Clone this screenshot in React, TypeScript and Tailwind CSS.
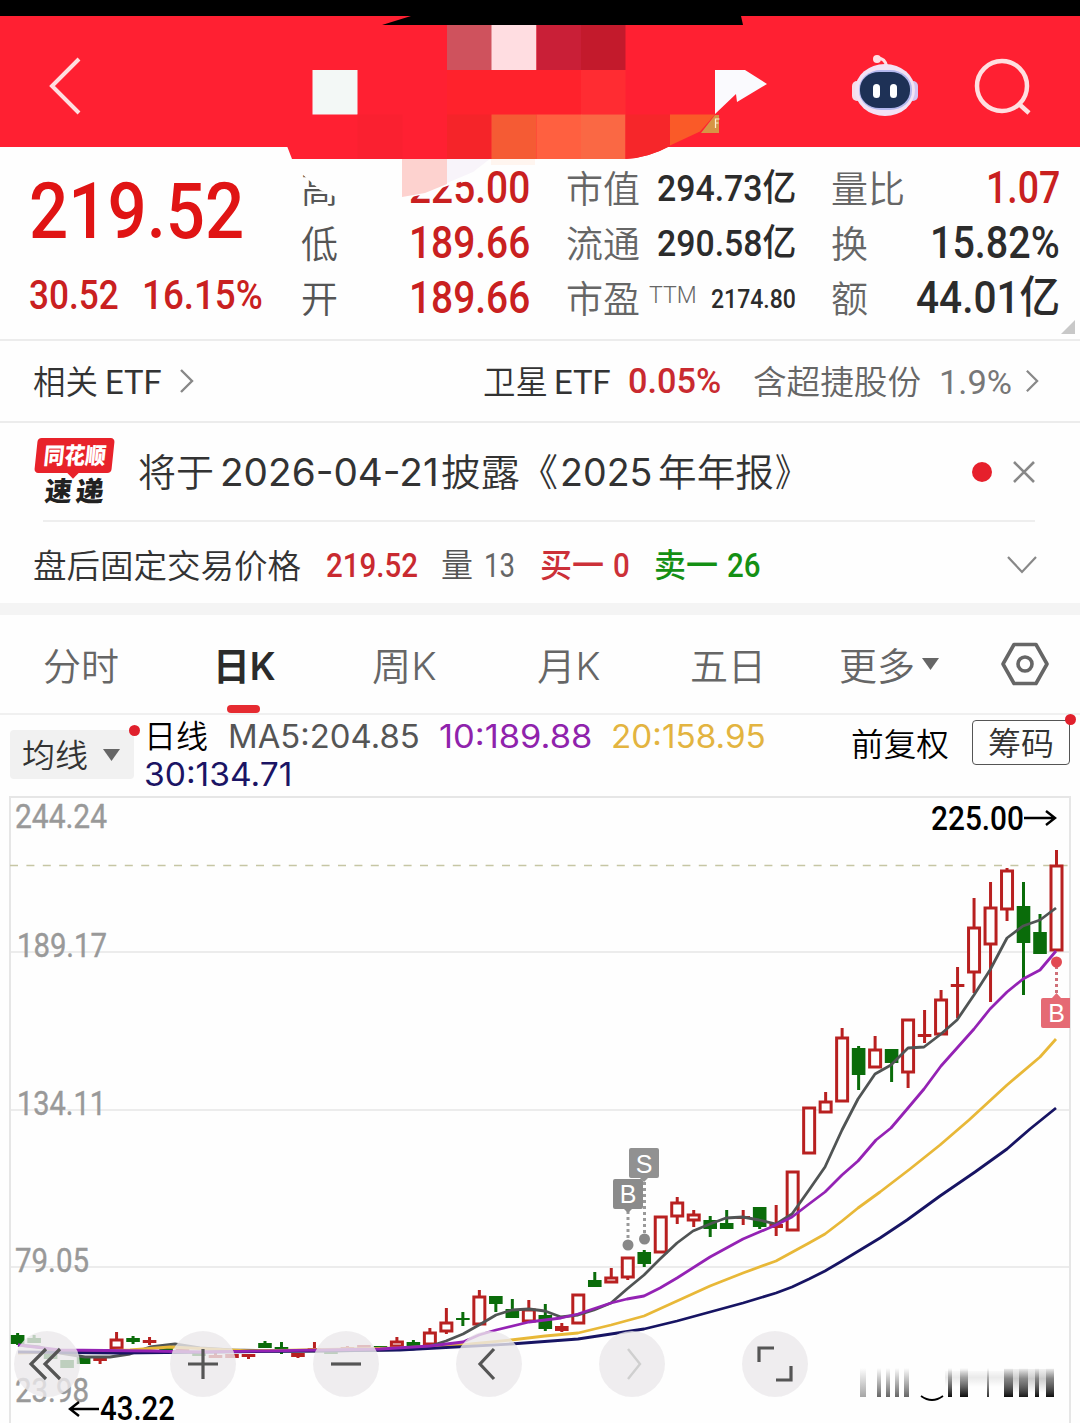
import { useLayoutEffect, useRef, useState } from 'react';
import type { ReactNode } from 'react';

const DIN = "font-[Roboto,'Noto_Sans_CJK_SC',sans-serif]";

type FitProps = {
  className: string;
  children: ReactNode;
};

/** Squeezes a line of text to the width of its box */
function Fit({ className, children }: FitProps) {
  const boxRef = useRef<HTMLSpanElement | null>(null);
  const textRef = useRef<HTMLSpanElement | null>(null);
  const [scale, setScale] = useState(1);

  useLayoutEffect(() => {
    if (boxRef.current && textRef.current) {
      setScale(boxRef.current.offsetWidth / textRef.current.offsetWidth);
    }
  }, [children]);

  return (
    <span ref={boxRef} className={`block shrink-0 leading-none ${className}`}>
      <span
        ref={textRef}
        className="inline-block origin-left whitespace-nowrap leading-none align-top"
        style={{ transform: `scaleX(${scale})` }}
      >
        {children}
      </span>
    </span>
  );
}

function Header() {
  return (
    <header className="h-[147px] border-t-16 border-black bg-[#ff2032] flex items-center pl-[48px] pr-[48px]">
      <button className="w-[34px] h-[58px] mt-[9px]">
        <svg viewBox="0 0 34 58" fill="none" stroke="#ffdfe0" strokeWidth="4">
          <path d="M31 2 4 29l27 27" />
        </svg>
      </button>
      <div className="flex-1" />
      <svg className="w-[68px] h-[64px] mt-[6px] mr-[55px]" viewBox="0 0 68 64">
        <path d="M25 5q9-1 11 9" fill="none" stroke="#ffdfe4" strokeWidth="3" />
        <circle cx="26" cy="6" r="4" fill="#ffdfe4" />
        <rect x="1" y="28" width="10" height="20" rx="5" fill="#f5dcea" />
        <rect x="57" y="28" width="10" height="20" rx="5" fill="#d3c4f2" />
        <rect x="4" y="11" width="60" height="52" rx="30" ry="26" fill="#f3e2f4" />
        <rect x="8" y="17" width="53" height="40" rx="22" ry="19" fill="#b4b8ee" />
        <rect x="9" y="19" width="50" height="36" rx="19" ry="17" fill="#1e3156" />
        <rect x="22" y="31" width="7" height="14" rx="3.5" fill="#fff" />
        <rect x="39" y="31" width="7" height="14" rx="3.5" fill="#fff" />
      </svg>
      <svg className="w-[58px] h-[58px] mt-[9px]" viewBox="0 0 58 58" fill="none" stroke="#ffdfe0" strokeWidth="4.5">
        <circle cx="28" cy="29" r="25" />
        <path d="m45 47 10 9" />
      </svg>
    </header>
  );
}

/** Pixelated patch over the stock name */
function Mosaic() {
  return (
    <svg className="absolute left-0 top-0 w-[1080px] h-[205px] pointer-events-none" viewBox="0 0 1080 205">
      <path d="M290 158 302 174 320 190 336 197 345 182 402 199 425 194 447 186 460 182 474 180 478 168 484 158z" fill="#fefefe" />
      <path d="M402 158h45v26l-22 9-23 4z" fill="#fdd2cf" />
      <path d="M447 158h44l-18 14-26 11z" fill="#f8f4fa" />
      <path d="M491 158h44v7h-44z" fill="#fff5ef" />
      <path d="M382 25 411 16V0h330v16l2 9z" fill="#000" />
      <path d="M287 146h383q-22 12-45 13H292z" fill="#ff2032" />
      <rect x="447" y="25" width="45" height="45" fill="#cf525d" />
      <rect x="491.500" y="25" width="45" height="45" fill="#ffdde1" />
      <rect x="536.500" y="25" width="45" height="45" fill="#c91f37" />
      <rect x="581" y="25" width="44.500" height="45" fill="#c31a2c" />
      <rect x="312.500" y="70" width="45" height="44.500" fill="#f3f8f6" />
      <rect x="447" y="70" width="134" height="44.500" fill="#ff222c" />
      <rect x="581" y="70" width="44.500" height="44.500" fill="#ff2c32" />
      <rect x="357.500" y="114.500" width="45" height="44.500" fill="#fa2030" />
      <rect x="447" y="114.500" width="44.500" height="44.500" fill="#f52429" />
      <rect x="491.500" y="114.500" width="45" height="44.500" fill="#f55b34" />
      <rect x="536.500" y="114.500" width="45" height="44.500" fill="#ff6040" />
      <rect x="581" y="114.500" width="44.500" height="44.500" fill="#fa6844" />
      <path d="M625.500 114.500H670V146q-22 12-44.500 13z" fill="#f6262a" />
      <path d="M670 114.500h45l-15 17-30 14z" fill="#fa5a28" />
      <path d="M715 115h4v18h-18z" fill="#d69545" />
      <path d="M715 70h30l22 14-30 18-1-8-21 20z" fill="#fafafe" />
      <path d="M715.500 128v-9h4M715.500 123h3" fill="none" stroke="#fff0d0" strokeWidth="1.200" />
    </svg>
  );
}

function Quote() {
  return (
    <section className={`relative h-[194px] border-b-2 border-[#ececec] flex pt-[13px] ${DIN}`}>
      <div className="w-[301px] shrink-0 pl-[29px] text-[#e01414]">
        <Fit className="w-[215px] mt-[13px] text-[78px] font-medium">219.52</Fit>
        <div className="flex gap-[23px] mt-[24px] text-[41px] font-medium text-[#c92020]">
          <Fit className="w-[90px]">30.52</Fit>
          <Fit className="w-[121px]">16.15%</Fit>
        </div>
      </div>

      <div className="w-[229px] h-[165px] shrink-0 grid grid-rows-3">
        {[
          ['高', '225.00'],
          ['低', '189.66'],
          ['开', '189.66'],
        ].map(([label, value]) => (
          <div key={label} className="flex items-center justify-between">
            <span className="pt-[6px] text-[37px] leading-none font-[350] text-[#555]">{label}</span>
            <Fit className="w-[121px] text-[44px] font-medium text-[#c92020]">{value}</Fit>
          </div>
        ))}
      </div>

      <div className="w-[230px] h-[165px] ml-[36px] shrink-0 grid grid-rows-3 text-[37px] font-[350] text-[#666]">
        <div className="flex items-center justify-between">
          <span className="pt-[6px] leading-none">市值</span>
          <Fit className="w-[139px] pt-[1px] text-[37px] font-medium text-[#2c2c2c]">294.73亿</Fit>
        </div>
        <div className="flex items-center justify-between">
          <span className="pt-[6px] leading-none">流通</span>
          <Fit className="w-[139px] pt-[1px] text-[37px] font-medium text-[#2c2c2c]">290.58亿</Fit>
        </div>
        <div className="flex items-center">
          <span className="pt-[6px] leading-none">市盈</span>
          <Fit className="w-[48px] ml-[9px] -mt-[6px] text-[24px] font-light">TTM</Fit>
          <Fit className="w-[85px] ml-auto pt-[3px] text-[26px] font-medium text-[#2c2c2c]">2174.80</Fit>
        </div>
      </div>

      <div className="w-[229px] h-[165px] ml-[35px] shrink-0 grid grid-rows-3 text-[37px] font-[350] text-[#666]">
        <div className="flex items-center justify-between">
          <span className="pt-[6px] leading-none">量比</span>
          <Fit className="w-[74px] text-[44px] font-medium text-[#c92020]">1.07</Fit>
        </div>
        <div className="flex items-center justify-between">
          <span className="pt-[6px] leading-none">换</span>
          <Fit className="w-[130px] text-[44px] font-medium text-[#2c2c2c]">15.82%</Fit>
        </div>
        <div className="flex items-center justify-between">
          <span className="pt-[6px] leading-none">额</span>
          <Fit className="w-[144px] text-[44px] font-medium text-[#2c2c2c]">44.01亿</Fit>
        </div>
      </div>
      <svg className="absolute right-[5px] bottom-[5px] w-[14px] h-[14px]" viewBox="0 0 14 14">
        <path d="M14 0v14H0z" fill="#c8c8c8" />
      </svg>
    </section>
  );
}

function EtfRow() {
  return (
    <section className={`h-[82px] border-b-2 border-[#ececec] flex items-center pl-[33px] pr-[41px] text-[33px] text-[#333] ${DIN}`}>
      <Fit className="w-[65px] pt-[2px] font-[350]">相关</Fit>
      <Fit className="w-[57px] ml-[7px] pt-[1px] text-[34px]">ETF</Fit>
      <svg className="w-[15px] h-[24px] ml-[17px]" viewBox="0 0 15 24" fill="none" stroke="#888" strokeWidth="2.400">
        <path d="m2 1 11 11L2 23" />
      </svg>
      <Fit className="w-[65px] ml-auto pt-[2px] font-[350]">卫星</Fit>
      <Fit className="w-[57px] ml-[6px] pt-[1px] text-[34px]">ETF</Fit>
      <Fit className="w-[93px] ml-[17px] pt-[1px] text-[35px] font-medium text-[#c92a30]">0.05%</Fit>
      <Fit className="w-[168px] ml-[32px] pt-[2px] text-[#666] font-[350]">含超捷股份</Fit>
      <Fit className="w-[73px] ml-[18px] pt-[1px] text-[34px] text-[#777]">1.9%</Fit>
      <svg className="w-[14px] h-[24px] ml-[13px]" viewBox="0 0 15 24" fill="none" stroke="#888" strokeWidth="2.400">
        <path d="m2 1 11 11L2 23" />
      </svg>
    </section>
  );
}

function NewsRow() {
  return (
    <section className="h-[99px] ml-[34px] mr-[45px] flex items-center text-[#333] font-[Inter,'Noto_Sans_CJK_SC',sans-serif]">
      <div className="relative w-[81px] h-[70px] shrink-0 flex flex-col items-center">
        <div className="w-[77px] h-[35px] rounded-[4px] bg-[#e8222a] -skew-x-6 flex items-center justify-center">
          <Fit className="w-[62px] pt-[2px] text-[23px] font-black text-white">同花顺</Fit>
        </div>
        <span className="absolute top-[31px] left-[35px] size-[8px] rotate-45 bg-[#e8222a]" />
        <div className="flex gap-[4px] mt-[5px] -skew-x-6 text-[27px] font-black text-[#222]">
          <Fit className="w-[27px]">速</Fit>
          <Fit className="w-[28px]">递</Fit>
        </div>
      </div>
      <div className="flex items-center ml-[23px] -mt-[1px] text-[38px] font-[350]">
        <Fit className="w-[76px]">将于</Fit>
        <Fit className="w-[219px] ml-[6px] font-normal">2026-04-21</Fit>
        <Fit className="w-[79px] ml-[2px]">披露</Fit>
        <Fit className="w-[38px]">《</Fit>
        <Fit className="w-[92px] ml-[2px] font-normal">2025</Fit>
        <Fit className="w-[116px] ml-[6px]">年年报</Fit>
        <Fit className="w-[32px] ml-[1px]">》</Fit>
      </div>
      <span className="size-[20px] ml-auto -mt-[1px] rounded-full bg-[#e6202c]" />
      <svg className="w-[22px] h-[22px] ml-[21px] -mt-[1px]" viewBox="0 0 22 22" fill="none" stroke="#888" strokeWidth="2.600">
        <path d="m1 1 20 20M21 1 1 21" />
      </svg>
    </section>
  );
}

function AfterHoursRow() {
  return (
    <section className={`h-[81px] pt-[5px] pl-[33px] pr-[43px] flex items-center text-[33px] text-[#333] ${DIN}`}>
      <Fit className="w-[268px] pt-[2px] font-[350]">盘后固定交易价格</Fit>
      <Fit className="w-[92px] ml-[25px] font-medium text-[#c92a30]">219.52</Fit>
      <Fit className="w-[32px] ml-[23px] pt-[1px] font-[350] text-[#555]">量</Fit>
      <Fit className="w-[31px] ml-[11px] text-[#666]">13</Fit>
      <Fit className="w-[64px] ml-[25px] pt-[1px] font-medium text-[#cc3038]">买一</Fit>
      <Fit className="w-[17px] ml-[9px] font-medium text-[#cc3038]">0</Fit>
      <Fit className="w-[64px] ml-[24px] pt-[1px] font-medium text-[#149014]">卖一</Fit>
      <Fit className="w-[34px] ml-[9px] font-medium text-[#149014]">26</Fit>
      <svg className="w-[30px] h-[18px] ml-auto" viewBox="0 0 30 18" fill="none" stroke="#888" strokeWidth="2.200">
        <path d="m1 1 14 15L29 1" />
      </svg>
    </section>
  );
}

function Tabs() {
  return (
    <nav className="h-[100px] border-b-2 border-[#f0f0f0] flex items-center pl-[43px] pr-[31px] text-[38px] font-[350] text-[#666] font-[Inter,'Noto_Sans_CJK_SC',sans-serif]">
      <Fit className="w-[76px] pt-[3px]">分时</Fit>
      <div className="relative h-full flex items-center ml-[94px] text-[#2b2b2b]">
        <Fit className="w-[63px] pt-[3px] font-semibold">日K</Fit>
        <span className="absolute bottom-0 left-[14px] w-[33px] h-[8px] rounded-full bg-[#e62b31]" />
      </div>
      <Fit className="w-[65px] ml-[96px] pt-[3px]">周K</Fit>
      <Fit className="w-[64px] ml-[100px] pt-[3px]">月K</Fit>
      <Fit className="w-[76px] ml-[89px] pt-[3px]">五日</Fit>
      <Fit className="w-[76px] ml-[73px] pt-[3px]">更多</Fit>
      <svg className="w-[17px] h-[12px] ml-[7px]" viewBox="0 0 17 12">
        <path d="M0 0h17L8.500 12z" fill="#666" />
      </svg>
      <svg className="w-[48px] h-[44px] ml-auto" viewBox="0 0 48 44" fill="none" stroke="#666" strokeWidth="3.600">
        <path d="M13 2.500h22L46 22 35 41.500H13L2 22z" strokeLinejoin="round" />
        <circle cx="24" cy="22" r="7" />
      </svg>
    </nav>
  );
}

function MaBar() {
  return (
    <section className="h-[81px] flex pl-[10px] pr-[10px] text-[32px] text-[#333] font-[Inter,'Noto_Sans_CJK_SC',sans-serif]">
      <button className="relative w-[124px] h-[49px] mt-[15px] rounded-[4px] bg-[#f1f1f1] flex items-center pl-[12px]">
        <Fit className="w-[66px] pt-[2px] text-left font-[350]">均线</Fit>
        <svg className="w-[17px] h-[12px] ml-[15px]" viewBox="0 0 17 12">
          <path d="M0 0h17L8.500 12z" fill="#666" />
        </svg>
        <span className="absolute -top-[5px] -right-[6px] size-[11px] rounded-full bg-[#e0202c]" />
      </button>
      <div className="ml-[10px] pt-[6px]">
        <div className="flex h-[35px]">
          <Fit className="w-[64px] text-black font-[350]">日线</Fit>
          <Fit className="w-[192px] ml-[20px] text-[#555]">MA5:204.85</Fit>
          <Fit className="w-[153px] ml-[19px] text-[#8f22ac]">10:189.88</Fit>
          <Fit className="w-[155px] ml-[19px] text-[#e3b440]">20:158.95</Fit>
        </div>
        <Fit className="w-[148px] mt-[3px] text-[#1b1464]">30:134.71</Fit>
      </div>
      <Fit className="w-[98px] ml-auto mt-[14px] text-black font-[350]">前复权</Fit>
      <button className="relative w-[98px] h-[45px] mt-[5px] ml-[23px] border-[1.5px] border-[#555] rounded-[4px] flex items-center justify-center">
        <Fit className="w-[66px] pt-[2px] text-left font-[350]">筹码</Fit>
        <span className="absolute -top-[7px] -right-[7px] size-[11px] rounded-full bg-[#e0202c]" />
      </button>
    </section>
  );
}

type Candle = [up: 0 | 1, high: number, top: number, bottom: number, low: number];

/* newest first, one candle every 16.49px */
const candles: Candle[] = [
  [1, 850, 865, 951, 951],
  [0, 914, 932, 954, 954],
  [0, 882, 906, 943, 995],
  [1, 868, 870, 910, 921],
  [1, 882, 907, 945, 1002],
  [1, 898, 927, 973, 993],
  [1, 967, 984, 987, 1018],
  [1, 990, 999, 1035, 1035],
  [1, 1010, 1034, 1037, 1043],
  [1, 1019, 1019, 1073, 1088],
  [0, 1049, 1049, 1063, 1082],
  [1, 1036, 1049, 1068, 1068],
  [0, 1046, 1048, 1075, 1090],
  [1, 1028, 1037, 1102, 1102],
  [1, 1092, 1101, 1113, 1113],
  [1, 1107, 1107, 1154, 1154],
  [1, 1171, 1171, 1231, 1231],
  [1, 1205, 1224, 1228, 1236],
  [0, 1207, 1207, 1227, 1229],
  [1, 1210, 1216, 1219, 1225],
  [0, 1210, 1223, 1229, 1229],
  [0, 1216, 1220, 1229, 1237],
  [1, 1210, 1214, 1221, 1227],
  [1, 1197, 1202, 1217, 1224],
  [1, 1216, 1216, 1253, 1253],
  [0, 1250, 1252, 1264, 1267],
  [1, 1257, 1257, 1278, 1280],
  [1, 1268, 1277, 1283, 1283],
  [0, 1272, 1280, 1287, 1287],
  [1, 1294, 1294, 1324, 1324],
  [1, 1323, 1326, 1331, 1332],
  [0, 1304, 1315, 1329, 1331],
  [1, 1300, 1309, 1322, 1322],
  [0, 1299, 1309, 1318, 1318],
  [0, 1296, 1296, 1304, 1312],
  [1, 1290, 1296, 1325, 1325],
  [0, 1312, 1318, 1320, 1326],
  [1, 1308, 1322, 1332, 1334],
  [1, 1328, 1332, 1345, 1345],
  [0, 1340, 1342, 1346, 1346],
  [1, 1337, 1341, 1347, 1347],
  [0, 1346, 1346, 1349, 1349],
  [1, 1345, 1345, 1348, 1348],
  [1, 1346, 1347, 1349, 1350],
  [0, 1352, 1352, 1354, 1354],
  [1, 1342, 1348, 1352, 1352],
  [1, 1353, 1353, 1357, 1358],
  [0, 1342, 1347, 1349, 1354],
  [0, 1341, 1343, 1348, 1348],
  [1, 1354, 1354, 1357, 1359],
  [1, 1354, 1354, 1358, 1358],
  [1, 1353, 1355, 1358, 1358],
  [0, 1352, 1352, 1356, 1356],
  [1, 1349, 1349, 1352, 1352],
  [0, 1346, 1347, 1350, 1350],
  [1, 1337, 1340, 1343, 1345],
  [0, 1336, 1338, 1342, 1344],
  [1, 1332, 1339, 1349, 1349],
  [1, 1356, 1356, 1361, 1364],
  [0, 1357, 1357, 1364, 1364],
  [0, 1360, 1360, 1368, 1368],
  [0, 1353, 1353, 1359, 1359],
  [0, 1335, 1338, 1343, 1343],
  [0, 1333, 1335, 1344, 1345],
];

const ma5 =
  '18,1345 40,1347 60,1353 85,1357 110,1357 130,1354 150,1347 175,1344 200,1348 232,1350 280,1351 330,1351 380,1350 413,1349 430,1346 446,1341 463,1334 479,1325 496,1315 512,1310 529,1309 545,1311 561,1317 578,1315 594,1310 611,1303 627,1289 644,1275 660,1259 677,1243 693,1231 710,1224 726,1218 743,1217 759,1220 776,1224 792,1214 809,1190 825,1167 842,1130 858,1099 875,1074 891,1065 908,1048 924,1047 941,1034 957,1020 974,995 990,970 1007,938 1023,926 1040,920 1056,908';
const ma10 =
  '18,1345 60,1350 150,1351 200,1352 380,1349 430,1346 463,1342 479,1335 496,1330 529,1322 561,1318 578,1314 611,1303 627,1299 644,1296 660,1288 677,1278 710,1257 743,1239 776,1225 792,1217 809,1204 825,1192 842,1175 858,1161 876,1140 891,1128 908,1108 924,1089 941,1066 974,1029 990,1009 1007,992 1023,979 1040,970 1056,951';
const ma20 =
  '18,1353 130,1350 170,1347 250,1351 400,1348 460,1345 511,1340 545,1336 578,1333 611,1325 644,1316 677,1301 710,1286 743,1273 776,1261 809,1243 825,1234 842,1221 858,1208 880,1192 910,1169 940,1145 969,1120 1007,1085 1040,1057 1056,1039';
const ma30 =
  '18,1352 120,1353 400,1350 511,1344 578,1339 644,1329 677,1321 710,1312 743,1303 776,1293 792,1287 809,1279 825,1271 842,1261 880,1238 907,1220 940,1196 975,1172 1007,1149 1030,1129 1056,1108';

function Candles() {
  return (
    <g>
      {candles.map(([up, high, top, bottom, low], i) => {
        const x = 1056.5 - i * 16.49;
        const color = up ? '#b82020' : '#0a6c0a';
        const thin = bottom - top < 6;
        return (
          <g key={i} stroke={color} strokeWidth="3">
            {high < top && <path d={`M${x} ${high}V${top}`} />}
            {low > bottom && <path d={`M${x} ${bottom}V${low}`} />}
            <rect
              x={up && !thin ? x - 5.5 : x - 6.8}
              y={up && !thin ? top + 1 : top}
              width={up && !thin ? 11 : 13.6}
              height={up && !thin ? bottom - top - 2 : bottom - top}
              fill={up && !thin ? '#fefefe' : color}
              stroke={up && !thin ? color : 'none'}
            />
          </g>
        );
      })}
    </g>
  );
}

function Chart() {
  return (
    <svg className="block w-[1080px] h-[627px]" viewBox="0 796 1080 627">
      <g fill="none" stroke="#e6e6e6" strokeWidth="2">
        <path d="M10 1423V797h1060v626" />
        <path d="M10 952h1060M10 1110h1060M10 1267h1060" strokeWidth="1.600" />
      </g>
      <path d="M10 865.500h1060" stroke="#c6c6a4" strokeWidth="1.600" strokeDasharray="8 8.400" />

      <g className="font-[Roboto] font-normal" fontSize="33" fill="#999" stroke="#999" strokeWidth=".4">
        <text x="15" y="828" textLength="92" lengthAdjust="spacingAndGlyphs">244.24</text>
        <text x="17" y="957" textLength="90" lengthAdjust="spacingAndGlyphs">189.17</text>
        <text x="17" y="1115" textLength="89" lengthAdjust="spacingAndGlyphs">134.11</text>
        <text x="15" y="1272" textLength="74" lengthAdjust="spacingAndGlyphs">79.05</text>
        <text x="15" y="1402" textLength="74" lengthAdjust="spacingAndGlyphs">23.98</text>
      </g>

      <Candles />
      <g fill="none" strokeWidth="2.800" strokeLinejoin="round">
        <polyline points={ma5} stroke="#505454" />
        <polyline points={ma20} stroke="#e8b838" />
        <polyline points={ma30} stroke="#171463" />
        <polyline points={ma10} stroke="#9422b4" />
      </g>

      <g className="font-[Roboto] font-medium" fontSize="33" fill="#000">
        <text x="931" y="830" textLength="93" lengthAdjust="spacingAndGlyphs">225.00</text>
        <text x="100" y="1420" textLength="75" lengthAdjust="spacingAndGlyphs">43.22</text>
      </g>
      <g fill="none" stroke="#000" strokeWidth="2.400">
        <path d="M1024 818h30M1046 811l9 7-9 7" />
        <path d="M99 1409H71M79 1402l-9 7 9 7" />
      </g>

      {/* trade marks */}
      <g className="font-['Liberation_Sans']" fontSize="25" textAnchor="middle" fill="#fff">
        <g stroke="#999" strokeWidth="3" strokeDasharray="3 3">
          <path d="M628 1211v29M644.500 1182v53" />
        </g>
        <circle cx="628" cy="1245" r="5.500" fill="#888" />
        <circle cx="644.500" cy="1239" r="5.500" fill="#888" />
        <path d="M615 1179h26q2 0 2 2v26q0 2-2 2h-9l-4 4-4-4h-9q-2 0-2-2v-26q0-2 2-2z" fill="#8b8b8b" />
        <path d="M631 1148h26q2 0 2 2v26q0 2-2 2h-9l-4 4-4-4h-9q-2 0-2-2v-26q0-2 2-2z" fill="#919191" />
        <text x="628" y="1203">B</text>
        <text x="644" y="1173">S</text>

        <path d="M1056.500 966v28" stroke="#cf7078" strokeWidth="3" strokeDasharray="3 3" />
        <circle cx="1056.500" cy="962" r="5.500" fill="#e24a52" />
        <path d="M1043 998h9l4.500-5 4.500 5h9v30h-27q-2 0-2-2v-26q0-2 2-2z" fill="#e56a74" />
        <text x="1056.500" y="1022">B</text>
      </g>
    </svg>
  );
}

const controls = [
  'M35 21 20 36l15 15M49 21 34 36l15 15',
  'M36 21v30M21 36h30',
  'M21 36h30',
  'M41 21 27 36l14 15',
  'M32 21l12 15-12 15',
  'M20 34V20h15M52 38v14H37',
];

function ChartControls() {
  return (
    <div className="absolute left-[14px] top-[1331px] flex">
      {controls.map((d, i) => (
        <button
          key={d}
          className={`size-[66px] rounded-full bg-[#ebe9eb]/80 ${i === 0 ? 'mr-[90px]' : 'mr-[77px]'}`}
        >
          <svg
            viewBox="3 3 66 66"
            fill="none"
            stroke={i === 4 ? '#cfcfcf' : '#555'}
            strokeWidth={i === 4 ? 2.4 : 3.2}
          >
            <path d={d} />
          </svg>
        </button>
      ))}
    </div>
  );
}

/** Smeared corner stamp: [x, width, opacity] */
const streaks = [
  [860, 6, 0.35],
  [877, 4, 0.6],
  [886, 4, 0.6],
  [895, 4, 0.6],
  [904, 5, 0.6],
  [948, 4, 0.95],
  [960, 8, 0.95],
  [987, 2, 0.8],
  [1004, 9, 0.95],
  [1019, 9, 0.9],
  [1035, 4, 0.95],
  [1046, 8, 0.95],
];

function Stamp() {
  return (
    <svg className="absolute left-[856px] top-[1366px] w-[202px] h-[38px]" viewBox="856 1366 202 38">
      <defs>
        <linearGradient id="smear" x1="0" y1="0" x2="0" y2="1">
          <stop offset="0" stopColor="#000" stopOpacity="0" />
          <stop offset=".5" stopColor="#000" stopOpacity=".5" />
          <stop offset="1" stopColor="#000" />
        </linearGradient>
        <linearGradient id="haze" x1="0" y1="0" x2="0" y2="1">
          <stop offset="0" stopColor="#000" stopOpacity=".05" />
          <stop offset=".4" stopColor="#000" stopOpacity=".2" />
          <stop offset="1" stopColor="#000" stopOpacity="0" />
        </linearGradient>
      </defs>
      <rect x="945" y="1371" width="59" height="16" fill="url(#haze)" opacity=".4" />
      <rect x="1004" y="1369" width="50" height="24" fill="url(#haze)" />
      {streaks.map(([x, w, o]) => (
        <rect key={x} x={x} y="1368" width={w} height="29" fill="url(#smear)" opacity={o} />
      ))}
      <path d="M921 1396q11 8 22 0" fill="none" stroke="#000" strokeWidth="1.800" />
    </svg>
  );
}

export default function App() {
  return (
    <div className="relative w-[1080px] h-[1423px] overflow-hidden bg-[#fefefe]">
      <Header />
      <Quote />
      <EtfRow />
      <NewsRow />
      <div className="h-[2px] -mt-[2px] ml-[43px] mr-[45px] bg-[#eee]" />
      <AfterHoursRow />
      <div className="h-[12px] bg-[#f4f4f4]" />
      <Tabs />
      <MaBar />
      <Chart />
      <Mosaic />
      <ChartControls />
      <Stamp />
    </div>
  );
}
